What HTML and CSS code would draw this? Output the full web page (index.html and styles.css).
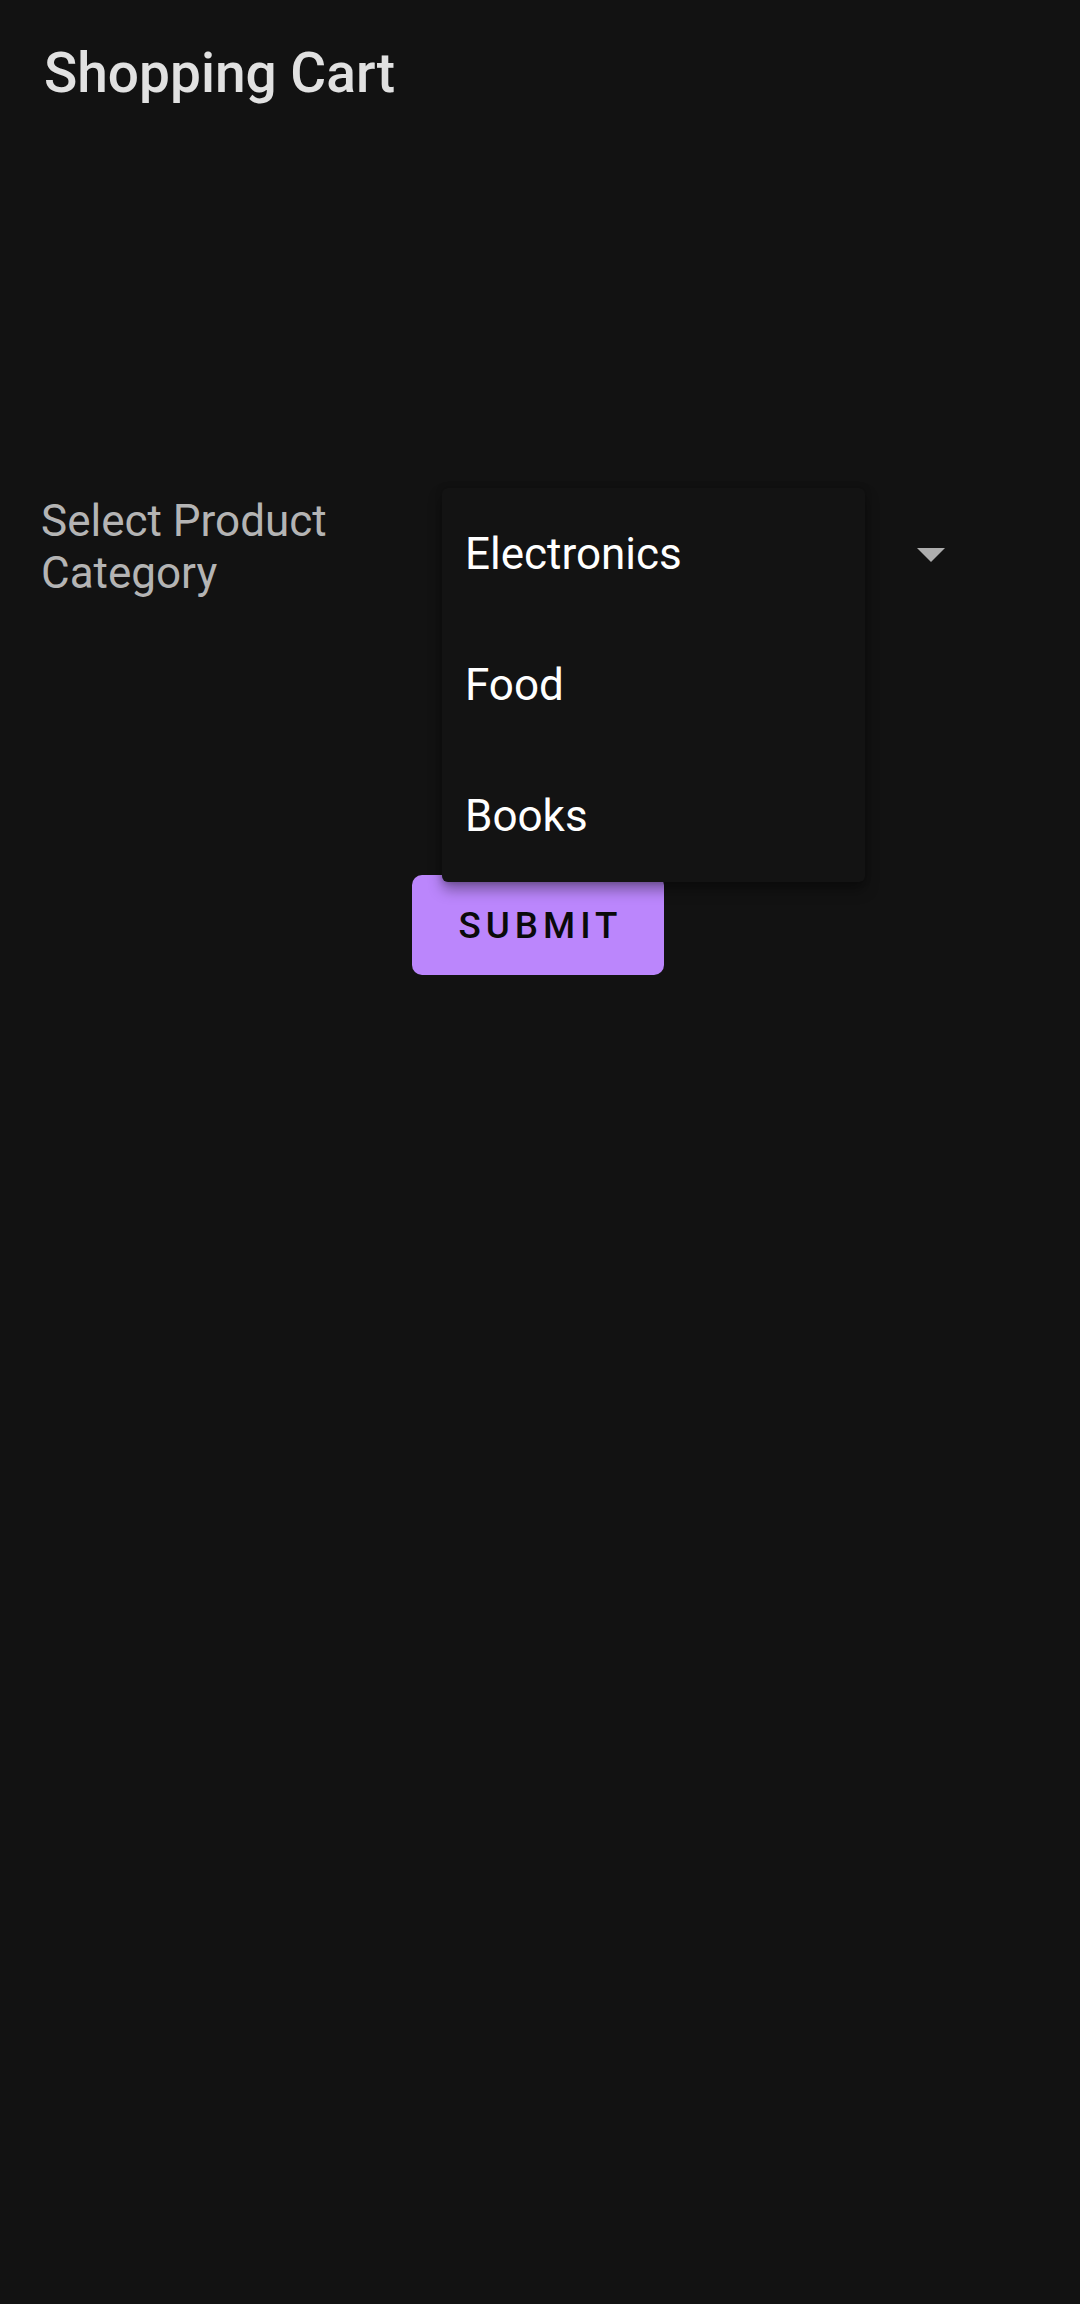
FILE: index.html
```html
<!DOCTYPE html>
<html lang="en">
<head>
<meta charset="utf-8">
<title>Shopping Cart</title>
<link rel="stylesheet" href="styles.css">
</head>
<body>
<div class="screen">
  <header class="appbar">
    <h1 class="title">Shopping Cart</h1>
  </header>
  <main class="content">
    <div class="form-row">
      <label class="field-label">Select Product<br>Category</label>
      <div class="spinner">
        <span class="spinner-value">Electronics</span>
        <svg class="spinner-arrow" viewBox="0 0 28 14" width="28" height="14" aria-hidden="true"><path d="M0 0 L28 0 L14 14 Z" fill="currentColor"/></svg>
        <ul class="popup">
          <li class="popup-item">Electronics</li>
          <li class="popup-item">Food</li>
          <li class="popup-item">Books</li>
        </ul>
      </div>
    </div>
    <div class="actions">
      <button class="btn-submit" type="button">SUBMIT</button>
    </div>
  </main>
</div>
</body>
</html>
```
FILE: styles.css
```css
html, body {
  margin: 0;
  padding: 0;
  background: #121212;
}
body {
  width: 1080px;
  height: 2304px;
  font-family: Roboto, "Noto Sans", "Liberation Sans", sans-serif;
  overflow: hidden;
}
.screen {
  display: flex;
  flex-direction: column;
}
.appbar {
  padding: 39px 0 0 44px;
}
.title {
  margin: 0;
  font-size: 55px;
  font-weight: 500;
  line-height: 68px;
  color: #e1e1e1;
}
.content {
  display: flex;
  flex-direction: column;
}
.form-row {
  display: flex;
  align-items: flex-start;
  margin-top: 381px;
  padding-left: 41px;
}
.field-label {
  width: 401px;
  margin-top: 7px;
  font-size: 44px;
  line-height: 52px;
  color: #b4b4b4;
}
.spinner {
  position: relative;
  width: 520px;
  height: 132px;
  display: flex;
  align-items: center;
  justify-content: space-between;
  padding: 0 17px 0 23px;
  box-sizing: border-box;
}
.spinner-value {
  font-size: 44px;
  color: #ffffff;
}
.spinner-arrow {
  color: #adadad;
  margin-top: 2px;
}
.popup {
  position: absolute;
  z-index: 10;
  left: 0;
  top: 0;
  width: 423px;
  margin: 0;
  padding: 0;
  list-style: none;
  background: #131313;
  border-radius: 6px;
  box-shadow: 0 8px 14px rgba(0, 0, 0, 0.35), 0 0 6px rgba(0, 0, 0, 0.25);
}
.popup-item {
  height: 131.3px;
  display: flex;
  align-items: center;
  padding-left: 23px;
  font-size: 44px;
  color: #ffffff;
}
.actions {
  display: flex;
  justify-content: center;
  margin-top: 255px;
  padding-right: 4px;
}
.btn-submit {
  width: 252px;
  height: 100px;
  border: none;
  border-radius: 10px;
  background: #bb86fc;
  color: #0a0a0a;
  font-family: Roboto, "Noto Sans", "Liberation Sans", sans-serif;
  font-size: 36.75px;
  font-weight: 500;
  letter-spacing: 5px;
  padding: 0 0 0 5px;
}
```
